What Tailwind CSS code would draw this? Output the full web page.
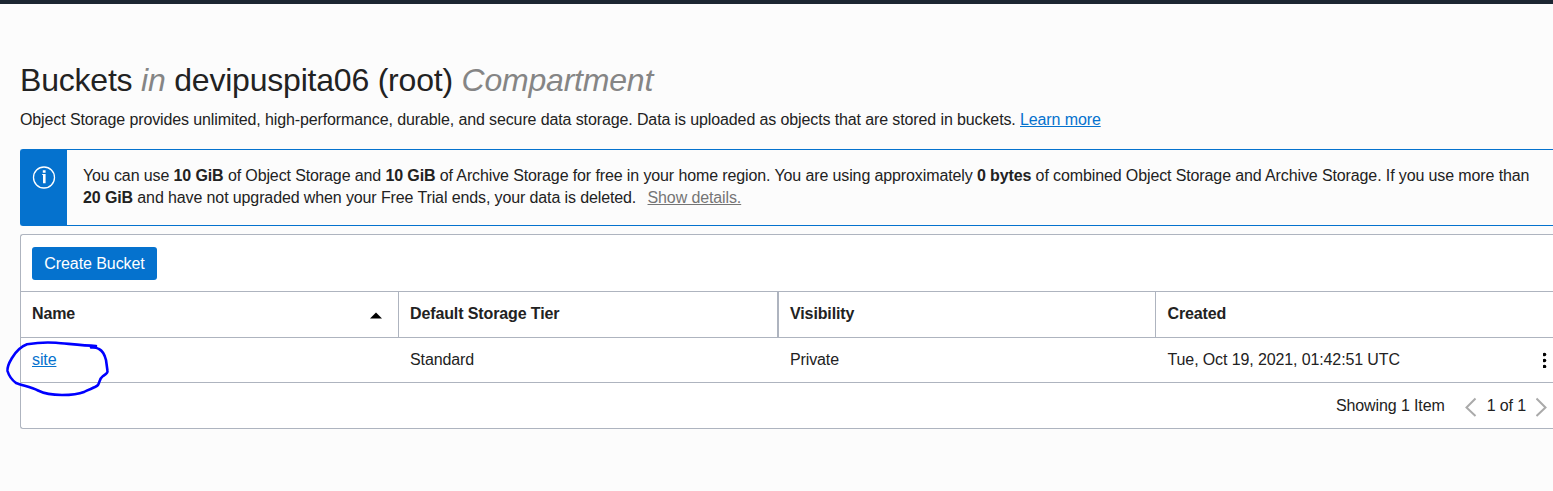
<!DOCTYPE html>
<html lang="en">
<head>
<meta charset="utf-8">
<title>Buckets</title>
<script src="https://cdn.jsdelivr.net/npm/@tailwindcss/browser@4"></script>
</head>
<body class="h-[491px] overflow-hidden bg-[#fcfcfc] font-['Liberation_Sans',Arial,sans-serif] text-base leading-[22px] tracking-[-0.116px] text-[#222]">
<div class="h-1 bg-[#1c2632]"></div>
<main class="relative pl-5 pt-14">
  <h1 class="h-10 whitespace-nowrap text-[32px] leading-10 tracking-[-0.21px]">Buckets <i class="text-[#858585]">in</i> devipuspita06 (root) <i class="text-[#858585]">Compartment</i></h1>
  <p class="mt-[9px] h-[22px] whitespace-nowrap">Object Storage provides unlimited, high-performance, durable, and secure data storage. Data is uploaded as objects that are stored in buckets. <a class="text-[#0572ce] underline" href="#">Learn more</a></p>

  <section class="mt-[18px] flex h-[77px] rounded-l-[3px] border-y border-l border-[#0572ce]">
    <div class="flex w-[46px] shrink-0 justify-center bg-[#0572ce] pt-[15px]">
      <svg class="size-6" viewBox="0 0 24 24" fill="none" stroke="#fff"><circle cx="12" cy="12.5" r="10.5" stroke-width="1.3"/><path d="M10.200 9H13.600V18.300H11V10H10.200ZM10.800 5.200H13.600V7.800H10.800Z" fill="#fff" stroke="none"/></svg>
    </div>
    <p class="whitespace-nowrap pl-4 pt-[15px]">You can use <b>10 GiB</b> of Object Storage and <b>10 GiB</b> of Archive Storage for free in your home region. You are using approximately <b>0 bytes</b> of combined Object Storage and Archive Storage. If you use more than<br><b>20 GiB</b> and have not upgraded when your Free Trial ends, your data is deleted. <a class="ml-[7px] text-[#757575] underline" href="#">Show details.</a></p>
  </section>

  <section class="mt-2 h-[195px] rounded-l-[3px] border-y border-l border-[#aeb4bf] bg-white">
    <div class="h-14 pl-[11px] pt-3">
      <button class="h-[33px] w-[125px] rounded-[3px] bg-[#0572ce] tracking-[-0.08px] text-white">Create Bucket</button>
    </div>
    <div class="grid h-[47px] grid-cols-[378px_380px_377px_1fr] border-y border-[#aeb4bf] font-bold leading-[43px]">
      <div class="flex justify-between border-r border-[#aeb4bf] pl-[11px] pr-4"><span>Name</span><svg class="mt-5 h-[7px] w-3" viewBox="0 0 12 7"><path d="M6 0.500L12 6.500H0Z" fill="#000"/></svg></div>
      <div class="border-r-2 border-[#aeb4bf] pl-[11px]">Default Storage Tier</div>
      <div class="border-r border-[#aeb4bf] pl-[11px]">Visibility</div>
      <div class="pl-[11.500px]">Created</div>
    </div>
    <div class="grid h-[45px] grid-cols-[378px_380px_377px_1fr] border-b border-[#aeb4bf] leading-[43px]">
      <div class="pl-[11px]"><a class="text-[#0572ce] underline" href="#">site</a></div>
      <div class="pl-[11px]">Standard</div>
      <div class="pl-[11px]">Private</div>
      <div class="flex justify-between pl-[11.500px] pr-1.5"><span>Tue, Oct 19, 2021, 01:42:51 UTC</span><svg class="mt-[14px] h-4 w-1" viewBox="0 0 4 16"><circle cx="1.500" cy="2.500" r="1.800"/><circle cx="1.500" cy="8.500" r="1.800"/><circle cx="1.500" cy="14.500" r="1.800"/></svg></div>
    </div>
    <div class="flex h-[45px] justify-end pr-[5px] leading-[45px]">
      <span>Showing 1 Item</span>
      <svg class="ml-5 mt-[14px] h-5 w-3" viewBox="0 0 12 20" fill="none" stroke="#aaa" stroke-width="2"><path d="M10.500 1.500L1.500 10.500L10.500 19"/></svg>
      <span class="ml-2.5">1 of 1</span>
      <svg class="ml-2.5 mt-[14px] h-5 w-3" viewBox="0 0 12 20" fill="none" stroke="#aaa" stroke-width="2"><path d="M.500 1.500L9.500 10.500L.500 19"/></svg>
    </div>
  </section>

  <svg class="pointer-events-none absolute left-0 top-[334px] h-[66px] w-[120px]" viewBox="0 338 120 66" fill="none" stroke="#00f" stroke-width="2.600" stroke-linejoin="round" stroke-linecap="round"><path d="M96 346C82 345.500 66 343.500 56 342.800C46 342 36 342.800 27 344.300C21 346.500 15 353 12 358C9 363 7 366 7.500 371C9 376 12 380 16 383C22 385.500 31 387 38 390.500C45 394 54 395 62 395C70 395 79 394 84 392C89 389 95 388 98 385C100 382 99 379 103 376C106 374 108 373 107.500 371L106 360C105 356 103 351 99 349C96 347 93 347.500 91 347.500"/></svg>
</main>
</body>
</html>
